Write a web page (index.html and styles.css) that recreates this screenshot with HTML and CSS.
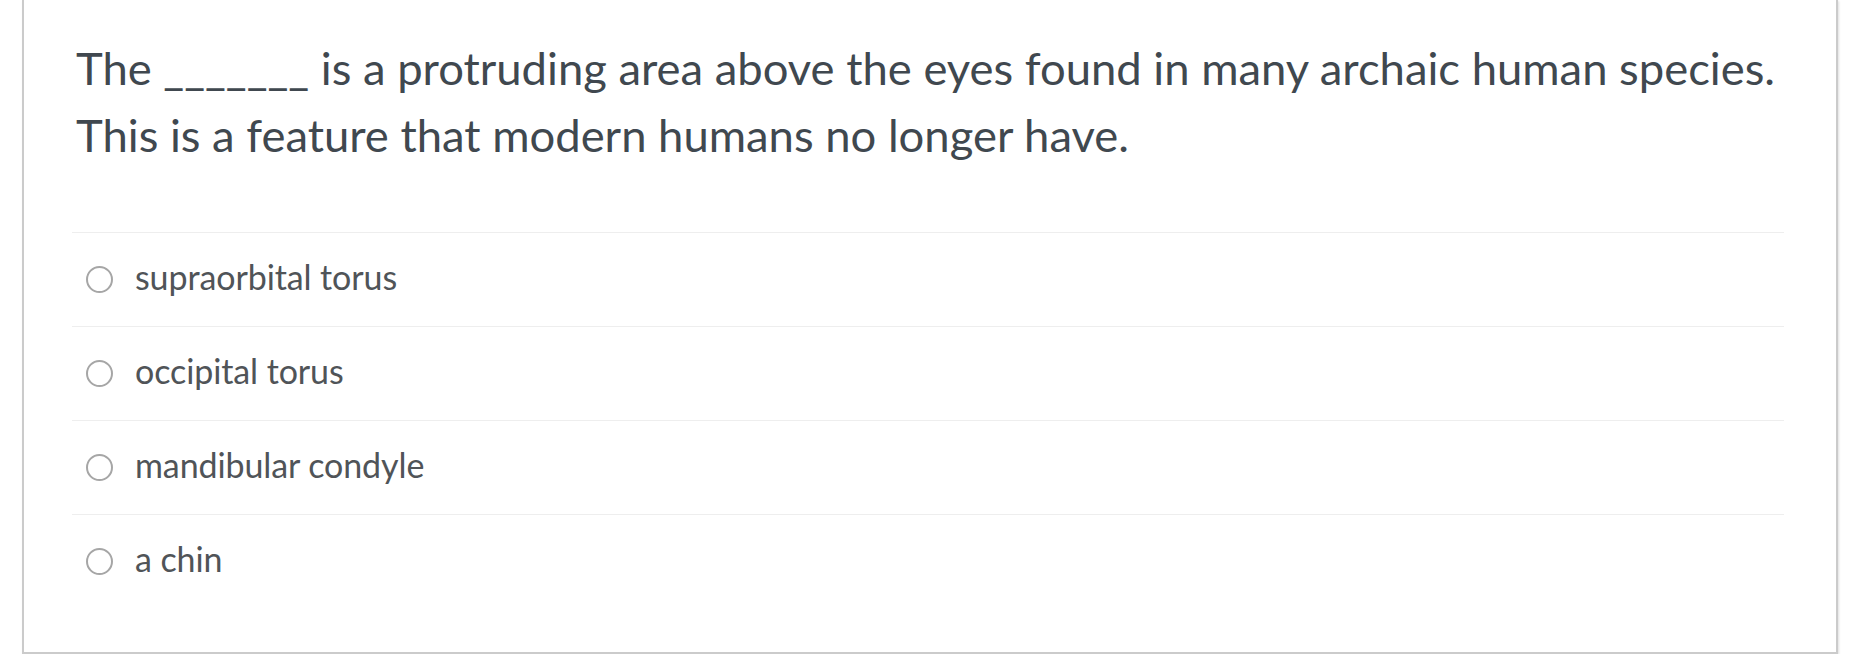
FILE: index.html
```html
<!DOCTYPE html>
<html lang="en">
<head>
<meta charset="utf-8">
<title>Quiz question</title>
<link rel="stylesheet" href="styles.css">
</head>
<body>
  <div class="question-card">
    <div class="question-text">
      <p>The _______ is a protruding area above the eyes found in many archaic human species.<br>This is a feature that modern humans no longer have.</p>
    </div>
    <div class="answers">
      <label class="answer">
        <input class="answer-radio" type="radio" name="q1">
        <span class="answer-label">supraorbital torus</span>
      </label>
      <label class="answer">
        <input class="answer-radio" type="radio" name="q1">
        <span class="answer-label">occipital torus</span>
      </label>
      <label class="answer">
        <input class="answer-radio" type="radio" name="q1">
        <span class="answer-label">mandibular condyle</span>
      </label>
      <label class="answer">
        <input class="answer-radio" type="radio" name="q1">
        <span class="answer-label">a chin</span>
      </label>
    </div>
  </div>
</body>
</html>
```
FILE: styles.css
```css
html, body {
  margin: 0;
  padding: 0;
  background: #ffffff;
}

body {
  font-family: Lato, "Noto Sans", sans-serif;
  padding-left: 22px;
  padding-right: 12px;
}

.question-card {
  box-sizing: border-box;
  width: 1816px;
  height: 654px;
  border: 2px solid #cbcbcb;
  border-top: none;
  box-shadow: 1px 1px 2px rgba(0, 0, 0, 0.12);
  padding: 34px 52px 0 48px;
  background: #ffffff;
}

.question-text {
  padding-left: 4px;
}

.question-text p {
  margin: 0;
  font-size: 45.4px;
  line-height: 67px;
  color: #40484f;
}

.answers {
  margin-top: 64px;
}

.answer {
  display: flex;
  align-items: center;
  height: 93px;
  border-top: 1px solid #eeeeee;
  padding-left: 14px;
  cursor: pointer;
}

.answer:last-child {
  height: 92px;
}

.answer-radio {
  appearance: none;
  -webkit-appearance: none;
  box-sizing: border-box;
  width: 27px;
  height: 27px;
  margin: 0 22px 0 0;
  border: 2px solid #a6a6a6;
  border-radius: 50%;
  background: #ffffff;
  flex: none;
}

.answer-label {
  font-size: 34px;
  letter-spacing: -0.1px;
  color: #505458;
  position: relative;
  top: -3px;
}
```
